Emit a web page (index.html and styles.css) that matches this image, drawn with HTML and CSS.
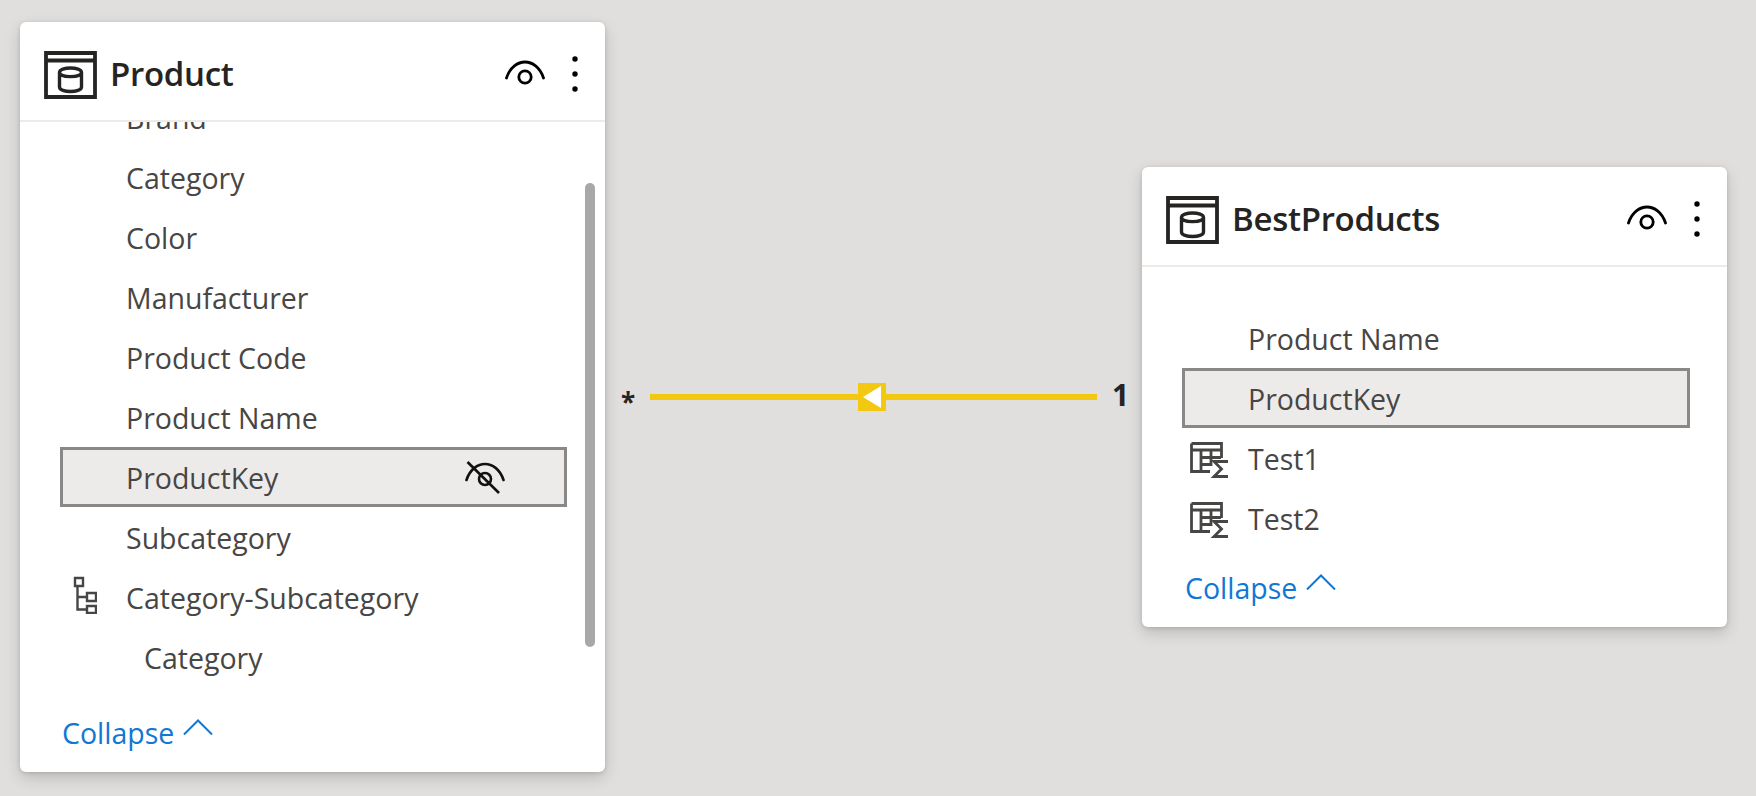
FILE: index.html
```html
<!DOCTYPE html>
<html lang="en">
<head>
<meta charset="utf-8">
<title>Model view</title>
<link rel="stylesheet" href="styles.css">
</head>
<body>
<svg class="defs" width="0" height="0" aria-hidden="true">
  <symbol id="tbl" viewBox="0 0 53 48">
    <path d="M2 2H51V46H2ZM2 9.500H51" fill="none" stroke="#252423" stroke-width="3.800"/>
    <path d="M15.500 21.500C15.500 15.500 37.500 15.500 37.500 21.500V36C37.500 42 15.500 42 15.500 36ZM15.500 21.500C15.500 27 37.500 27 37.500 21.500" fill="none" stroke="#252423" stroke-width="3.400"/>
  </symbol>
  <symbol id="eye" viewBox="0 0 40 26">
    <path d="M1.500 18C5 7 13 2 20 2S35 7 38.500 18" fill="none" stroke="#000" stroke-width="2.800" stroke-linecap="round"/>
    <circle cx="20" cy="17" r="6.200" fill="none" stroke="#000" stroke-width="2.800"/>
  </symbol>
  <symbol id="dots" viewBox="0 0 8 38">
    <circle cx="4" cy="4" r="2.700"/><circle cx="4" cy="19" r="2.700"/><circle cx="4" cy="34" r="2.700"/>
  </symbol>
  <symbol id="chev" viewBox="0 0 30 16">
    <path d="M1 15.500L15 1.500L29 15.500" fill="none" stroke="#0f78d4" stroke-width="2"/>
  </symbol>
  <symbol id="sum" viewBox="0 0 39 36">
    <path d="M1.500 1.500H31.500V16M1.500 1.500V29.500H20M1.500 8H31.500M11 8V29.500M11 15.500H31M11 22.500H20M21 8V24" fill="none" stroke="#484644" stroke-width="2.800"/>
    <path d="M38 19.500H24L31.500 27L24 34.500H38" fill="none" stroke="#484644" stroke-width="2.800"/>
  </symbol>
</svg>

<section class="card card-product">
  <header class="card-head">
    <svg class="ic-table"><use href="#tbl"/></svg>
    <h2 class="title">Product</h2>
    <svg class="ic-eye"><use href="#eye"/></svg>
    <svg class="ic-dots"><use href="#dots"/></svg>
  </header>
  <div class="viewport">
    <ul class="rows rows-scrolled">
      <li class="row"><span class="label">Brand</span></li>
      <li class="row"><span class="label">Category</span></li>
      <li class="row"><span class="label">Color</span></li>
      <li class="row"><span class="label">Manufacturer</span></li>
      <li class="row"><span class="label">Product Code</span></li>
      <li class="row"><span class="label">Product Name</span></li>
      <li class="row selected"><span class="label">ProductKey</span>
        <svg class="ic-hidden" viewBox="0 0 40 33">
          <path d="M1.500 19C5 8 13 3 20 3S35 8 38.500 19" fill="none" stroke="#111" stroke-width="2.600" stroke-linecap="round"/>
          <circle cx="20" cy="18" r="6" fill="none" stroke="#111" stroke-width="2.600"/>
          <path d="M2.500 1L34 32" stroke="#111" stroke-width="2.600"/>
        </svg>
      </li>
      <li class="row"><span class="label">Subcategory</span></li>
      <li class="row">
        <svg class="ic-hier" viewBox="0 0 24 38">
          <path d="M2 2H10V10H2ZM14 17H23V25H14ZM14 30H23V37H14ZM4.500 10V33.500H14M4.500 21H14" fill="none" stroke="#484644" stroke-width="2.400"/>
        </svg>
        <span class="label">Category-Subcategory</span></li>
      <li class="row nested"><span class="label">Category</span></li>
    </ul>
    <div class="scrollthumb"></div>
  </div>
  <a class="collapse">Collapse<svg class="ic-chev"><use href="#chev"/></svg></a>
</section>

<div class="relationship">
  <span class="card-many">*</span>
  <span class="rel-line rel-left"></span>
  <span class="rel-marker"></span>
  <span class="rel-line rel-right"></span>
  <span class="card-one">1</span>
</div>

<section class="card card-best">
  <header class="card-head">
    <svg class="ic-table"><use href="#tbl"/></svg>
    <h2 class="title">BestProducts</h2>
    <svg class="ic-eye"><use href="#eye"/></svg>
    <svg class="ic-dots"><use href="#dots"/></svg>
  </header>
  <div class="viewport">
    <ul class="rows rows-top">
      <li class="row"><span class="label">Product Name</span></li>
      <li class="row selected"><span class="label">ProductKey</span></li>
      <li class="row"><svg class="ic-sum"><use href="#sum"/></svg><span class="label">Test1</span></li>
      <li class="row"><svg class="ic-sum"><use href="#sum"/></svg><span class="label">Test2</span></li>
    </ul>
  </div>
  <a class="collapse">Collapse<svg class="ic-chev"><use href="#chev"/></svg></a>
</section>
</body>
</html>
```
FILE: styles.css
```css
* { box-sizing: border-box; }
html, body { margin: 0; height: 100%; }
body {
  background: #e1dfdd;
  font-family: "Open Sans", "Noto Sans", sans-serif;
  overflow: hidden;
  position: relative;
}
.defs { position: absolute; }

.card {
  position: absolute;
  width: 585px;
  background: #fff;
  border-radius: 6px;
  box-shadow: 0 6px 15px rgba(0,0,0,.16), 0 1px 4px rgba(0,0,0,.13);
  display: flex;
  flex-direction: column;
}
.card-product { left: 20px; top: 22px; height: 750px; }
.card-best { left: 1142px; top: 167px; height: 460px; }

.card-head {
  height: 100px;
  flex: none;
  display: flex;
  align-items: flex-start;
  padding: 29px 26px 0 24px;
  border-bottom: 2px solid #edebe9;
}
.ic-table { width: 53px; height: 48px; flex: none; }
.title {
  margin: 0 0 0 13px;
  font-size: 33px;
  line-height: 46px;
  font-weight: 600;
  color: #252423;
  letter-spacing: -0.3px;
  flex: 1;
}
.ic-eye { width: 40px; height: 26px; margin-top: 9px; flex: none; }
.ic-dots { width: 8px; height: 38px; margin: 4px 0 0 26px; flex: none; }

.viewport { flex: 1; overflow: hidden; position: relative; }
.rows { list-style: none; margin: 0; padding: 0; }
.rows-scrolled { margin-top: -35px; }
.rows-top { margin-top: 41px; }

.row {
  height: 60px;
  margin: 0 38px 0 40px;
  padding: 1px 0 0 66px;
  display: flex;
  align-items: center;
  position: relative;
  color: #484644;
  font-size: 28.5px;
  white-space: nowrap;
}
.row.nested { padding-left: 84px; }
.row.selected {
  background: #edebe9;
  box-shadow: inset 0 0 0 3px #8a8886;
}
.card-best .row { margin-right: 37px; padding-left: 66px; }

.ic-hier { position: absolute; left: 13px; top: 9px; width: 24px; height: 38px; }
.ic-sum { position: absolute; left: 8px; top: 14px; width: 39px; height: 36px; }
.ic-hidden { margin-left: auto; margin-right: 62px; width: 40px; height: 33px; flex: none; }

.scrollthumb {
  position: absolute;
  left: 565px;
  top: 61px;
  width: 10px;
  height: 464px;
  background: #a8a8a8;
  border-radius: 5px;
}

.collapse {
  flex: none;
  height: 85px;
  padding: 27px 0 0 42px;
  display: flex;
  align-items: flex-start;
  color: #0f78d4;
  font-size: 28.5px;
  line-height: 38px;
}
.card-best .collapse { height: 70px; padding-top: 12px; padding-left: 43px; }
.ic-chev { width: 30px; height: 16px; margin: 5px 0 0 9px; flex: none; }

.relationship {
  position: absolute;
  left: 621px;
  top: 383px;
  width: 503px;
  height: 28px;
  display: flex;
  align-items: center;
}
.card-many {
  width: 29px;
  flex: none;
  font-size: 26px;
  line-height: 28px;
  font-weight: 700;
  color: #252423;
  margin-top: 9px;
  height: 28px;
}
.rel-line { height: 6px; background: #f2c811; flex: none; }
.rel-left { width: 208px; }
.rel-right { width: 211px; }
.rel-marker {
  width: 28px;
  height: 28px;
  flex: none;
  background: #f2c811;
  position: relative;
}
.rel-marker::after {
  content: "";
  position: absolute;
  left: 5px;
  top: 3px;
  border-style: solid;
  border-width: 11px 18px 11px 0;
  border-color: transparent #fff transparent transparent;
}
.card-one {
  margin-left: 15px;
  margin-top: -4px;
  font-size: 30px;
  line-height: 28px;
  font-weight: 700;
  color: #252423;
}
```
